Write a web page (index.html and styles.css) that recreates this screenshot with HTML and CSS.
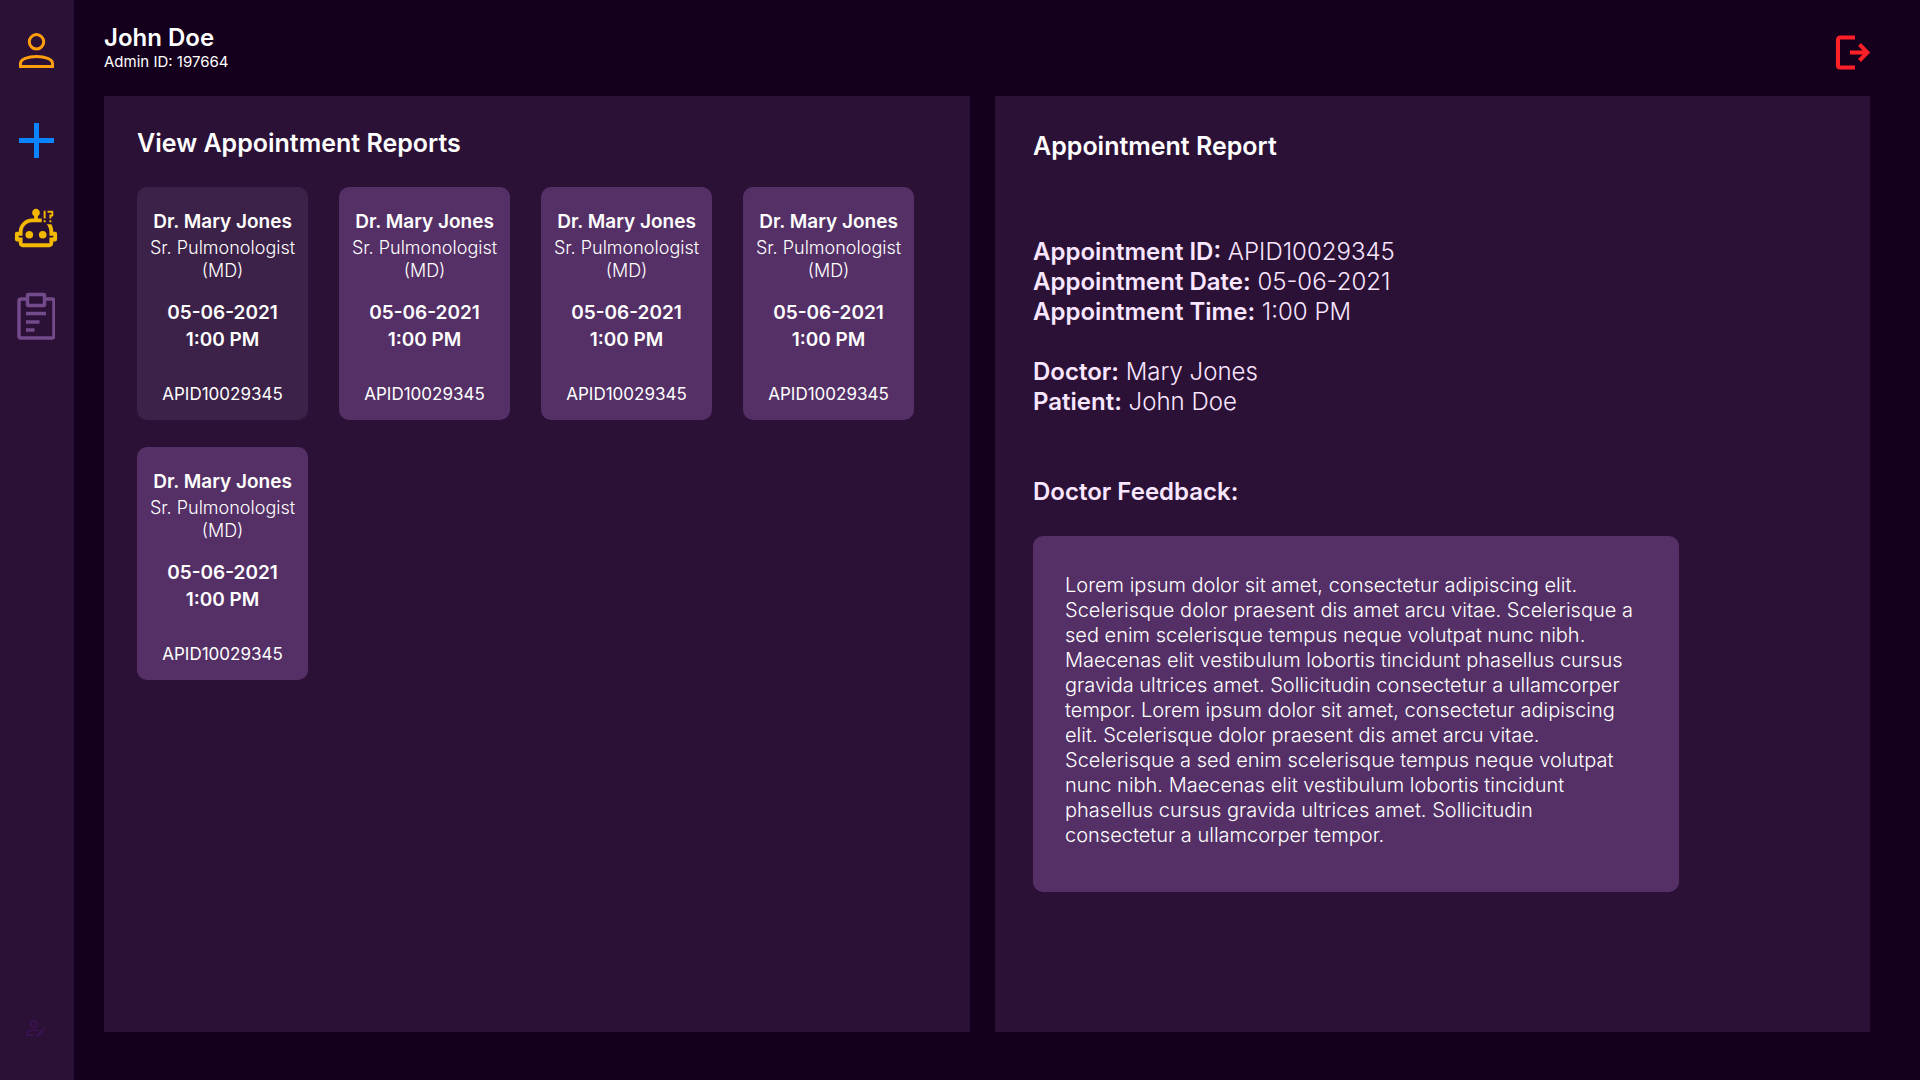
FILE: index.html
```html
<!DOCTYPE html>
<html lang="en">
<head>
<meta charset="utf-8">
<meta name="viewport" content="width=device-width, initial-scale=1">
<title>Appointment Reports</title>
<link rel="stylesheet" href="styles.css">
</head>
<body>
<div class="app">
  <nav class="sidebar" aria-label="Main">
    <a class="nav-link nav-profile" href="#profile" aria-label="Profile">
      <svg width="35" height="35" viewBox="0 0 35 35" fill="none" stroke="currentColor" stroke-width="3"><circle cx="17.5" cy="8.8" r="7.2"/><path d="M1.5 33.5v-3c0-4.5 7.5-7 16-7s16 2.500 16 7v3z"/></svg>
    </a>
    <a class="nav-link nav-add" href="#add" aria-label="Add">
      <svg width="35" height="35" viewBox="0 0 35 35" fill="currentColor"><path d="M15 0h5v15h15v5H20v15h-5V20H0v-5h15z"/></svg>
    </a>
    <a class="nav-link nav-bot" href="#assistant" aria-label="Assistant">
      <svg width="46" height="46" viewBox="0 0 24 24" fill="currentColor"><path fill-rule="evenodd" d="M20 4H18V3H20.500C20.780 3 21 3.220 21 3.500V5.500C21 5.780 20.780 6 20.500 6H20V7H19V5H20V4M19 9H20V8H19V9M17 3H16V7H17V3M16 8V9H17V8H16M23 15V18C23 18.550 22.550 19 22 19H21V20C21 21.110 20.110 22 19 22H5C3.900 22 3 21.110 3 20V19H2C1.450 19 1 18.550 1 18V15C1 14.450 1.450 14 2 14H3C3 10.130 6.130 7 10 7H11V5.730C10.400 5.390 10 4.740 10 4C10 2.900 10.900 2 12 2S14 2.900 14 4C14 4.740 13.600 5.390 13 5.730V7H14C14.340 7 14.670 7.030 15 7.080V9H10C7.240 9 5 11.240 5 14V16H3V17H5V20H19V17H21V16H19V14C19 12.500 18.500 11 17.500 10H20C20.700 11.200 21 12.500 21 14H22C22.550 14 23 14.450 23 15Z"/><circle cx="8.500" cy="15.500" r="2"/><circle cx="15.500" cy="15.500" r="2"/></svg>
    </a>
    <a class="nav-link nav-reports" href="#reports" aria-label="Appointment reports" aria-current="page">
      <svg width="38" height="48" viewBox="0 0 38 48" fill="none" stroke="currentColor" stroke-width="3.500" stroke-linejoin="round"><path d="M10 7H4a2 2 0 0 0-2 2v35a2 2 0 0 0 2 2h31a2 2 0 0 0 2-2V9a2 2 0 0 0-2-2h-7"/><rect x="10.500" y="2.500" width="17" height="11" rx="1"/><path d="M9 21.500h20M9 30h13.500M9 38h8.500"/></svg>
    </a>
    <a class="nav-link nav-edit" href="#edit" aria-label="Edit account">
      <svg width="20" height="18" viewBox="0 0 20 18" fill="none" stroke="currentColor" stroke-width="2"><circle cx="8" cy="4" r="3"/><path d="M12 10C6 9.500 1 11 1 13.500V15h7"/><path stroke-width="2.500" d="M10.500 16.500l6-6M17.300 9.700l1.500-1.500"/></svg>
    </a>
  </nav>

  <div class="content">
    <header class="topbar">
      <div class="user">
        <h1 class="user-name">John Doe</h1>
        <p class="user-id">Admin ID: 197664</p>
      </div>
      <button class="logout" type="button" aria-label="Log out">
        <svg width="35" height="36" viewBox="0 0 35 36" fill="none" stroke="currentColor" stroke-width="4"><path d="M20 2.500H5A2 2 0 0 0 3 4.500v26a2 2 0 0 0 2 2h15"/><path d="M15 17.500h17M24.500 9.500l8 8-8 8"/></svg>
      </button>
    </header>

    <main class="panels">
      <section class="panel panel-list">
        <h2 class="panel-title">View Appointment Reports</h2>
        <div class="cards">
          <button class="card card-selected" type="button" aria-pressed="true">
            <span class="card-name">Dr. Mary Jones</span>
            <span class="card-role">Sr. Pulmonologist (MD)</span>
            <span class="card-when">05-06-2021<br>1:00 PM</span>
            <span class="card-id">APID10029345</span>
          </button>
          <button class="card" type="button">
            <span class="card-name">Dr. Mary Jones</span>
            <span class="card-role">Sr. Pulmonologist (MD)</span>
            <span class="card-when">05-06-2021<br>1:00 PM</span>
            <span class="card-id">APID10029345</span>
          </button>
          <button class="card" type="button">
            <span class="card-name">Dr. Mary Jones</span>
            <span class="card-role">Sr. Pulmonologist (MD)</span>
            <span class="card-when">05-06-2021<br>1:00 PM</span>
            <span class="card-id">APID10029345</span>
          </button>
          <button class="card" type="button">
            <span class="card-name">Dr. Mary Jones</span>
            <span class="card-role">Sr. Pulmonologist (MD)</span>
            <span class="card-when">05-06-2021<br>1:00 PM</span>
            <span class="card-id">APID10029345</span>
          </button>
          <button class="card" type="button">
            <span class="card-name">Dr. Mary Jones</span>
            <span class="card-role">Sr. Pulmonologist (MD)</span>
            <span class="card-when">05-06-2021<br>1:00 PM</span>
            <span class="card-id">APID10029345</span>
          </button>
        </div>
      </section>

      <section class="panel panel-report">
        <h2 class="panel-title">Appointment Report</h2>
        <div class="details">
          <p><strong>Appointment ID:</strong> APID10029345</p>
          <p><strong>Appointment Date:</strong> 05-06-2021</p>
          <p><strong>Appointment Time:</strong> 1:00 PM</p>
        </div>
        <div class="details people">
          <p><strong>Doctor:</strong> Mary Jones</p>
          <p><strong>Patient:</strong> John Doe</p>
        </div>
        <h3 class="feedback-title">Doctor Feedback:</h3>
        <p class="feedback">Lorem ipsum dolor sit amet, consectetur adipiscing elit. Scelerisque dolor praesent dis amet arcu vitae. Scelerisque a sed enim scelerisque tempus neque volutpat nunc nibh. Maecenas elit vestibulum lobortis tincidunt phasellus cursus gravida ultrices amet. Sollicitudin consectetur a ullamcorper tempor. Lorem ipsum dolor sit amet, consectetur adipiscing elit. Scelerisque dolor praesent dis amet arcu vitae. Scelerisque a sed enim scelerisque tempus neque volutpat nunc nibh. Maecenas elit vestibulum lobortis tincidunt phasellus cursus gravida ultrices amet. Sollicitudin consectetur a ullamcorper tempor.</p>
      </section>
    </main>
  </div>
</div>
</body>
</html>
```
FILE: styles.css
```css
* { box-sizing: border-box; }

body {
  margin: 0;
  background: #14001c;
  color: #fff;
  font-family: Inter, "Open Sans", sans-serif;
  font-weight: 300;
}

h1, h2, h3, p { margin: 0; }

svg { display: block; }

button {
  border: 0;
  color: inherit;
  font: inherit;
  cursor: pointer;
}

.app {
  display: flex;
  min-height: 100vh;
}

/* Sidebar */
.sidebar {
  display: flex;
  flex-direction: column;
  align-items: center;
  flex: none;
  width: 74px;
  padding: 33px 2px 42px 0;
  background: #2c1137;
}

.nav-profile { color: #ff9e0d; }
.nav-add { margin-top: 55px; color: #0a84ff; }
.nav-bot { margin-top: 47px; color: #f2b900; }
.nav-reports { margin-top: 41px; color: #734a8a; }
.nav-edit { margin-top: auto; color: #3b1150; }

/* Content */
.content {
  display: flex;
  flex: 1;
  flex-direction: column;
  min-width: 0;
  padding: 0 50px 48px 30px;
}

.topbar {
  display: flex;
  justify-content: space-between;
  height: 96px;
  padding-top: 24px;
}

.user-name {
  font-size: 24px;
  font-weight: 600;
  line-height: 28px;
}

.user-id {
  font-size: 15px;
  font-weight: 400;
  line-height: 20px;
}

.logout {
  align-self: flex-start;
  margin-top: 11px;
  padding: 0;
  background: none;
  color: #ff1f26;
}

.panels {
  display: grid;
  flex: 1;
  grid-template-columns: 866fr 875fr;
  gap: 25px;
}

.panel { background: #2c1137; }
.panel-list { padding: 31px 33px; }
.panel-report { padding: 34px 38px; color: #f9e6ff; }

.panel-title {
  color: #fff;
  font-size: 25px;
  font-weight: 600;
  line-height: 32px;
}

/* Appointment cards */
.cards {
  display: flex;
  flex-wrap: wrap;
  gap: 27px 31px;
  margin-top: 28px;
}

.card {
  display: flex;
  flex-direction: column;
  width: 171px;
  padding: 21px 10px 14px;
  border-radius: 10px;
  background: #553066;
  text-align: center;
}

.card-selected { background: #3c2248; }

.card-name {
  font-size: 19px;
  font-weight: 600;
  line-height: 28px;
}

.card-role {
  font-size: 18px;
  line-height: 23px;
}

.card-when {
  margin-top: 17px;
  font-size: 19px;
  font-weight: 600;
  line-height: 27px;
}

.card-id {
  margin-top: 29px;
  font-size: 17px;
  font-weight: 400;
  line-height: 24px;
}

/* Report */
.details {
  margin-top: 75px;
  font-size: 24px;
  line-height: 30px;
}

.details strong { font-weight: 600; }

.people { margin-top: 30px; }

.feedback-title {
  margin-top: 60px;
  font-size: 24px;
  font-weight: 600;
  line-height: 30px;
}

.feedback {
  max-width: 646px;
  margin-top: 29px;
  padding: 37px 32px 44px;
  border-radius: 10px;
  background: #553066;
  color: #fff;
  font-size: 20px;
  line-height: 25px;
}
```
